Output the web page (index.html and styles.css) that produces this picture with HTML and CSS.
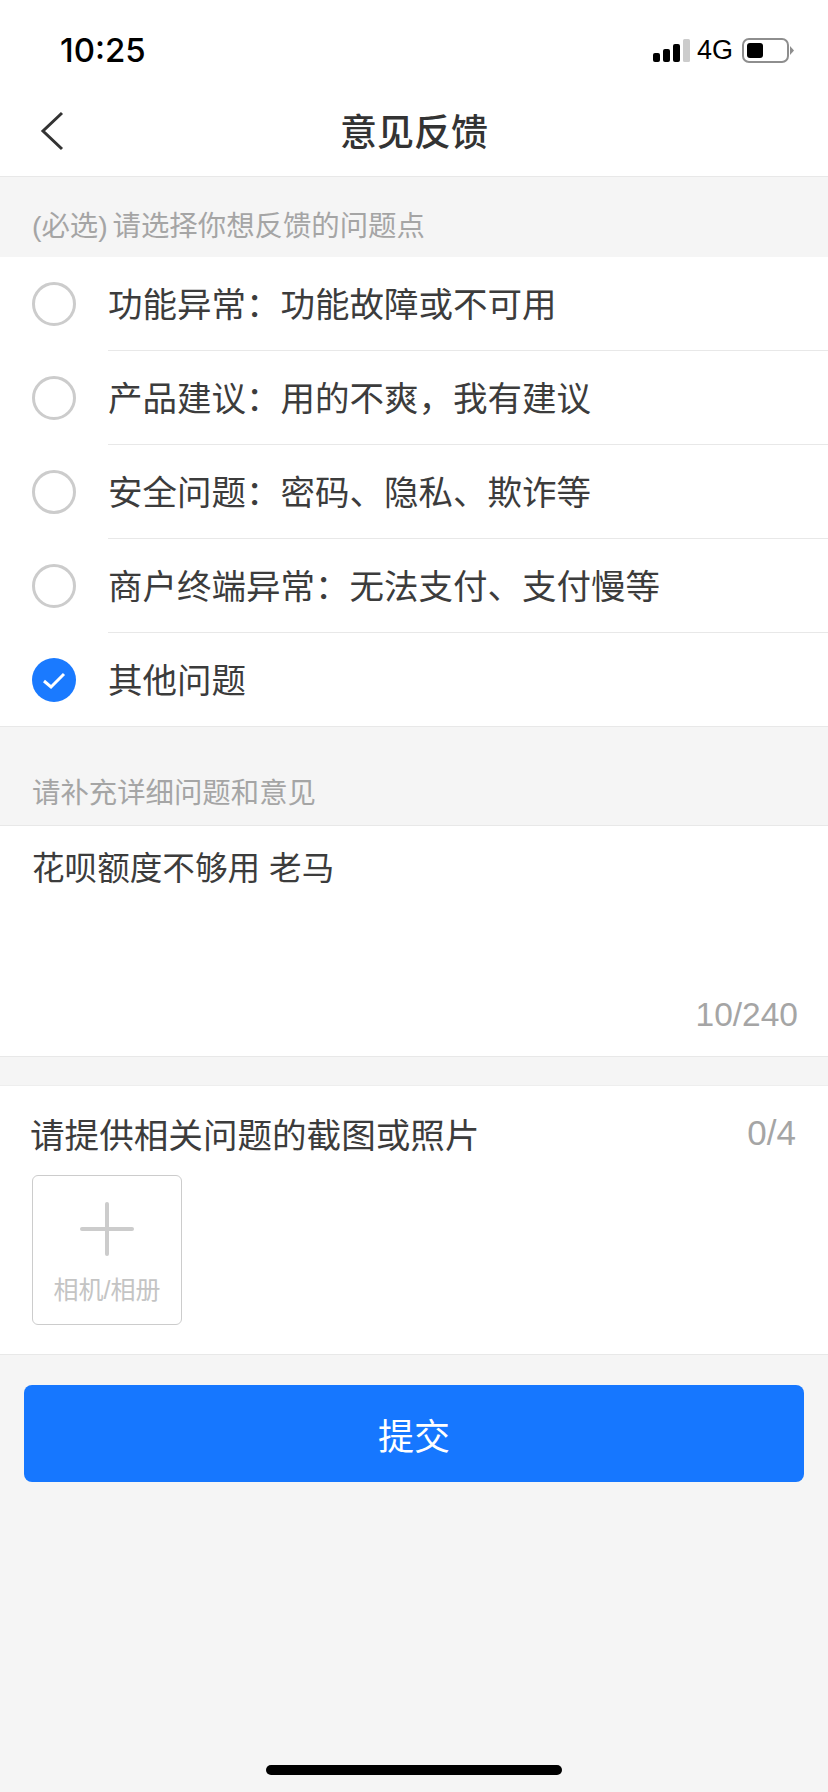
FILE: index.html
```html
<!DOCTYPE html>
<html lang="zh-CN">
<head>
    <meta charset="UTF-8">
    <title>意见反馈</title>
    <link rel="stylesheet" href="styles.css">
</head>
<body>
    <div class="status-bar">
        <span class="time">10:25</span>
        <div class="status-icons">
            <svg class="signal" width="37" height="23" viewBox="0 0 37 23">
                <rect x="0" y="14" width="7" height="9" rx="2" fill="#000"/>
                <rect x="10" y="10" width="7" height="13" rx="2" fill="#000"/>
                <rect x="20" y="5" width="7" height="18" rx="2" fill="#000"/>
                <rect x="30" y="0" width="7" height="23" rx="1.500" fill="#ccc"/>
            </svg>
            <span class="network">4G</span>
            <svg class="battery" width="52" height="25" viewBox="0 0 52 25">
                <rect x="1" y="1" width="45" height="23" rx="6" fill="none" stroke="#8e8e8e" stroke-width="2"/>
                <rect x="5" y="5" width="16" height="15" rx="3" fill="#000"/>
                <path d="M48 8 L52 12.500 L48 17 Z" fill="#8e8e8e"/>
            </svg>
        </div>
    </div>

    <div class="nav-bar">
        <svg class="back" width="26" height="40" viewBox="0 0 26 40">
            <path d="M23 2 L4 20 L23 38" fill="none" stroke="#333" stroke-width="3"/>
        </svg>
        <h1>意见反馈</h1>
    </div>

    <div class="section-label first">(必选) 请选择你想反馈的问题点</div>

    <div class="options">
        <div class="option">
            <span class="radio"></span>
            <span class="option-text">功能异常：功能故障或不可用</span>
        </div>
        <div class="option">
            <span class="radio"></span>
            <span class="option-text">产品建议：用的不爽，我有建议</span>
        </div>
        <div class="option">
            <span class="radio"></span>
            <span class="option-text">安全问题：密码、隐私、欺诈等</span>
        </div>
        <div class="option">
            <span class="radio"></span>
            <span class="option-text">商户终端异常：无法支付、支付慢等</span>
        </div>
        <div class="option">
            <span class="radio checked">
                <svg width="24" height="20" viewBox="0 0 24 20">
                    <path d="M2 11 L9 17 L22 4" fill="none" stroke="#fff" stroke-width="3"/>
                </svg>
            </span>
            <span class="option-text">其他问题</span>
        </div>
    </div>

    <div class="section-label second">请补充详细问题和意见</div>

    <div class="feedback-box">
        <p class="feedback-text">花呗额度不够用 老马</p>
        <div class="counter">10/240</div>
    </div>

    <div class="upload">
        <div class="upload-head">
            <span class="upload-title">请提供相关问题的截图或照片</span>
            <span class="upload-count">0/4</span>
        </div>
        <div class="upload-tile">
            <svg width="54" height="54" viewBox="0 0 54 54">
                <rect x="0" y="25" width="54" height="4" rx="2" fill="#ccc"/>
                <rect x="25" y="0" width="4" height="54" rx="2" fill="#ccc"/>
            </svg>
            <span class="upload-label">相机/相册</span>
        </div>
    </div>

    <div class="submit-wrap">
        <button class="submit">提交</button>
    </div>

    <div class="home-bar"></div>
</body>
</html>
```

FILE: styles.css
```css
* {
    box-sizing: border-box;
}
body {
    margin: 0;
    width: 828px;
    height: 1792px;
    position: relative;
    overflow: hidden;
    background-color: #f5f5f5;
    color: #3c3c3c;
    font-family: "Liberation Sans", "Noto Sans CJK SC", sans-serif;
}
.status-bar {
    height: 88px;
    background-color: #fff;
    display: flex;
    align-items: center;
    justify-content: space-between;
    padding: 12px 34px 0 60px;
}
.time {
    font-family: Inter, "Liberation Sans", sans-serif;
    font-size: 33px;
    font-weight: 500;
    color: #000;
}
.status-icons {
    display: flex;
    align-items: center;
}
.network {
    font-family: "Liberation Sans", sans-serif;
    font-size: 27px;
    color: #000;
    margin: 0 9px 0 7px;
}
.nav-bar {
    height: 89px;
    background-color: #fff;
    border-bottom: 1px solid #e8e8e8;
    display: flex;
    align-items: center;
    justify-content: center;
    position: relative;
}
.nav-bar h1 {
    margin: 0;
    padding-bottom: 4px;
    font-size: 37px;
    font-weight: 500;
    color: #333;
}
.back {
    position: absolute;
    left: 39px;
    top: 23px;
}
.section-label {
    font-size: 28.400px;
    color: #a5a5a5;
    padding-left: 32px;
    display: flex;
    align-items: center;
}
.section-label.first {
    height: 80px;
    padding-top: 13px;
    word-spacing: -3px;
}
.section-label.second {
    height: 98px;
    padding-top: 28px;
}
.options {
    background-color: #fff;
    border-bottom: 1px solid #e8e8e8;
}
.option {
    height: 94px;
    display: flex;
    align-items: center;
    padding-left: 32px;
}
.option:last-child {
    height: 93px;
}
.radio {
    flex: none;
    width: 44px;
    height: 44px;
    border-radius: 50%;
    border: 3px solid #ccc;
    display: flex;
    align-items: center;
    justify-content: center;
}
.radio.checked {
    background-color: #1a7aff;
    border: none;
}
.option-text {
    flex: 1;
    height: 100%;
    margin-left: 32px;
    padding-bottom: 3px;
    display: flex;
    align-items: center;
    font-size: 34.500px;
    border-bottom: 1px solid #e8e8e8;
}
.option:last-child .option-text {
    border-bottom: none;
}
.feedback-box {
    height: 232px;
    background-color: #fff;
    border-top: 1px solid #e8e8e8;
    border-bottom: 1px solid #e8e8e8;
    padding: 22px 32px 0;
    position: relative;
}
.feedback-text {
    margin: 0;
    font-size: 32.600px;
    line-height: 42px;
}
.counter {
    position: absolute;
    right: 30px;
    bottom: 22px;
    font-family: "Liberation Sans", sans-serif;
    font-size: 33.500px;
    color: #a5a5a5;
}
.upload {
    margin-top: 28px;
    height: 270px;
    background-color: #fff;
    border-top: 1px solid #eee;
    border-bottom: 1px solid #e8e8e8;
    padding: 24px 32px 0;
}
.upload-head {
    display: flex;
    justify-content: space-between;
    align-items: center;
    height: 46px;
}
.upload-title {
    margin-left: -2px;
    font-size: 34.600px;
}
.upload-count {
    font-family: "Liberation Sans", sans-serif;
    font-size: 35px;
    color: #a5a5a5;
}
.upload-tile {
    margin-top: 19px;
    width: 150px;
    height: 150px;
    border: 1px solid #ccc;
    border-radius: 6px;
    display: flex;
    flex-direction: column;
    align-items: center;
    padding-top: 26px;
}
.upload-label {
    margin-top: 14px;
    font-size: 25px;
    color: #c4c4c4;
}
.submit-wrap {
    padding: 30px 24px 0;
}
.submit {
    display: block;
    width: 100%;
    height: 97px;
    border: none;
    border-radius: 8px;
    background-color: #1677ff;
    color: #fff;
    font-family: inherit;
    font-size: 36px;
}
.home-bar {
    position: absolute;
    left: 266px;
    bottom: 17px;
    width: 296px;
    height: 10px;
    border-radius: 5px;
    background-color: #000;
}
```
